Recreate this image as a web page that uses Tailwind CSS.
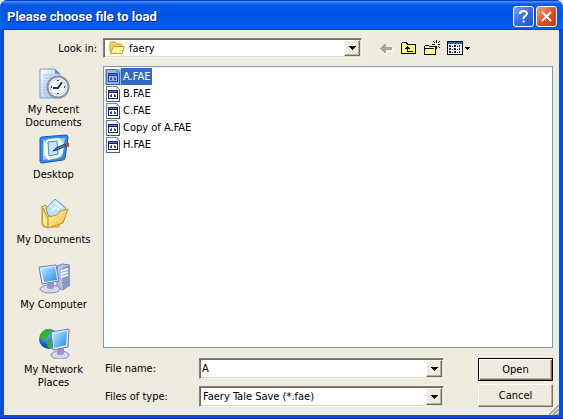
<!DOCTYPE html>
<html lang="en">
<head>
    <meta charset="UTF-8">
    <meta name="viewport" content="width=device-width, initial-scale=1.0">
    <title>Please choose file to load</title>
    <script src="https://cdn.jsdelivr.net/npm/@tailwindcss/browser@4"></script>
</head>
<body class="bg-[#dfe8f5] text-black text-[11px] leading-[13px] font-['Tahoma','DejaVu_Sans_Condensed',sans-serif]">

    <!-- Shared icons -->
    <svg class="hidden">
        <symbol id="arrow" viewBox="0 0 7 4" shape-rendering="crispEdges">
            <path d="M0 0h7v1H0zM1 1h5v1H1zM2 2h3v1H2zM3 3h1v1H3z"/>
        </symbol>
        <symbol id="file" viewBox="0 0 16 16" shape-rendering="crispEdges">
            <path d="M1 0h10l4 4v12H1z" fill="#71819a"/>
            <path d="M2 1h9v3h3v11H2z" fill="#fff"/>
            <path d="M11 1l3 3h-3z" fill="#d5dcea"/>
            <path d="M14 4h1v12H2v-1h12z" fill="#4b5870"/>
            <path d="M3 4h10v9H3z" fill="#14216b"/>
            <path d="M4 5h8v1H4z" fill="#4f78d8"/>
            <path d="M4 7h8v5H4z" fill="#fff"/>
            <path d="M5 9h2v2H5z" fill="#29489e"/>
            <path d="M9 9h2v2H9z" fill="#29489e"/>
            <path d="M6 8h1v1H6zM9 8h1v1H9z" fill="#c03030"/>
        </symbol>
    </svg>

    <div class="min-h-screen flex flex-col rounded-t-lg overflow-hidden bg-[#0a4be0] border-b border-[#001a9c]">

        <!-- Title bar -->
        <header class="h-[30px] shrink-0 flex items-center justify-between pl-[7px] pr-[6px] bg-linear-to-b from-[#0a5be8] via-[#0054e3] to-[#0060f8] shadow-[inset_0_1px_0_#0a3fc0,inset_0_3px_2px_#3c8cf8,inset_0_-1px_1px_#0040c0]">
            <h1 class="pt-[3px] text-[13px] leading-4 font-bold text-white font-['Trebuchet_MS','Roboto',sans-serif] [text-shadow:1px_1px_#0a1883]">Please choose file to load</h1>
            <div class="flex gap-[2px] pt-[2px]">
                <button aria-label="Help" class="size-[21px] rounded-[3px] border border-white bg-linear-to-br from-[#7aa4f5] via-[#3a6ce8] to-[#1f50d0] grid place-items-center">
                    <svg class="size-[19px]" viewBox="0 0 19 19" fill="none" stroke="#fff" stroke-width="2"><path d="M6 7C6 3 13 3 13 6.500C13 9 9.500 8.500 9.500 12"/><path d="M9.500 13.500v2"/></svg>
                </button>
                <button aria-label="Close" class="size-[21px] rounded-[3px] border border-white bg-linear-to-br from-[#f0a088] via-[#e0512c] to-[#c03a12] grid place-items-center">
                    <svg class="size-[19px]" viewBox="0 0 19 19" stroke="#fff" stroke-width="2"><path d="M5 5l9 9M14 5l-9 9"/></svg>
                </button>
            </div>
        </header>

        <main class="relative flex-1 flex flex-col mx-1 mb-[3px] pt-2 pr-[6px] pb-2 bg-[#efebde]">

            <!-- Folder and toolbar -->
            <div class="flex items-center">
                <label for="folder" class="w-[99px] pr-[6px] text-right">Look in:</label>
                <div class="relative flex-1 max-w-[259px] h-5 bg-white border border-t-[#848278] border-l-[#848278] border-b-[#f8f6f0] border-r-[#f8f6f0] shadow-[inset_1px_1px_#716f64,inset_-1px_-1px_#e0dccc]">
                    <select id="folder" class="appearance-none w-full h-full pl-[25px] outline-none">
                        <option>faery</option>
                    </select>
                    <svg class="absolute left-[5px] top-[2px] w-4 h-[14px] pointer-events-none" viewBox="0 0 16 14">
                        <path d="M1 11V2.500Q1 1 2.500 1H6l1.500 2H12q1 0 1 1v7z" fill="#f5d162" stroke="#c99a22"/>
                        <path d="M1.500 12.500L4 5.500h11.500L13 12.500z" fill="#fdf0a0" stroke="#c99a22" stroke-linejoin="round"/>
                    </svg>
                    <span class="absolute right-px top-px bottom-px w-4 grid place-items-center pointer-events-none bg-[#efebde] border border-t-white border-l-white border-b-[#716f64] border-r-[#716f64] shadow-[inset_-1px_-1px_#b5b1a2]"><svg class="w-[7px] h-1"><use href="#arrow"/></svg></span>
                </div>
                <div class="flex items-center pl-[18px] gap-[7px]">
                    <button aria-label="Back" class="w-[14px]">
                        <svg class="w-[14px] h-4" viewBox="0 0 14 16" shape-rendering="crispEdges"><path d="M2 10h1v1h1v1h1v1h1v-2h7V8h1v4H7v3H5v-1H4v-1H3v-1H2z" fill="#fff"/><path d="M0 8h1V7h1V6h1V5h1V4h2v3h6v3H6v3H4v-1H3v-1H2v-1H1V9H0z" fill="#aca899"/></svg>
                    </button>
                    <button aria-label="Up one level" class="w-4">
                        <svg class="size-4" viewBox="0 0 16 16" shape-rendering="crispEdges"><path d="M1 2h5v1h1v1h8v10H0V3h1z"/><path d="M1 3h4v1h1v1h8v8H1z" fill="#ffff80"/><path d="M6 6h1v1h1v1h1v1H7v2h5v1H6V9H4V8h1V7h1z"/></svg>
                    </button>
                    <button aria-label="New folder" class="w-4">
                        <svg class="size-4" viewBox="0 0 16 16" shape-rendering="crispEdges"><path d="M1 5h4v1h7v9H0V6h1z"/><path d="M1 6h4v1h6v7H1z" fill="#ffff80"/><path d="M1 8h9v1H1z" fill="#000"/><path d="M12 0h1v3h-1zM12 6h1v3h-1zM8 4h3v1H8zM14 4h2v1h-2zM9 1h1v1H9zM10 2h1v1h-1zM14 2h1v1h-1zM15 1h1v1h-1zM14 6h1v1h-1zM15 7h1v1h-1z"/></svg>
                    </button>
                    <button aria-label="View menu" class="w-6">
                        <svg class="w-6 h-4" viewBox="0 0 24 16" shape-rendering="crispEdges"><path d="M0 1h16v14H0z"/><path d="M1 4h14v10H1z" fill="#fff"/><path d="M1 2h14v2H1z" fill="#31619c"/><path d="M2 5h2v2H2zM7 5h2v2H7zM12 5h1v2h-1zM2 8h2v2H2zM7 8h2v2H7zM12 8h1v2h-1zM2 11h2v2H2zM7 11h2v2H7zM12 11h1v2h-1z" fill="#15157a"/><path d="M5 6h1v1H5zM10 6h1v1h-1zM5 9h1v1H5zM10 9h1v1h-1zM5 12h1v1H5zM10 12h1v1h-1z"/><path d="M18 7h5v1h-5zM19 8h3v1h-3zM20 9h1v1h-1z"/></svg>
                    </button>
                </div>
            </div>

            <div class="flex-1 flex pt-2">

                <!-- Places -->
                <nav class="w-[99px] pt-px text-center">
                    <a href="#" class="h-[65px] flex flex-col items-center gap-1">
                        <svg class="size-8 shrink-0" viewBox="0 0 32 32">
                            <defs><linearGradient id="page" x2="1" y2="1"><stop stop-color="#fff"/><stop offset="1" stop-color="#8db8f2"/></linearGradient></defs>
                            <path d="M2 2h15l5 5v24H2z" fill="url(#page)" stroke="#7f9fd2"/>
                            <path d="M17 2v5h5z" fill="#6a8fd0"/>
                            <path d="M5 8h9M5 11h12M5 14h8M5 17h6M5 20h6M5 23h6M5 26h8" stroke="#a5c3ee"/>
                            <circle cx="20" cy="20" r="10.500" fill="#eef3f6" stroke="#8a929a" stroke-width="2"/>
                            <circle cx="20" cy="20" r="8" fill="#f4fafc" stroke="#c5d0d6"/>
                            <path d="M20 13v1M20 26v1M13 20h1M26 20h1" stroke="#444" stroke-width="2"/>
                            <path d="M24 15l-4 6h-5" fill="none" stroke="#1a3a58" stroke-width="2"/>
                        </svg>
                        <span>My Recent<br>Documents</span>
                    </a>
                    <a href="#" class="h-[65px] flex flex-col items-center gap-1">
                        <svg class="size-8 shrink-0" viewBox="0 0 32 32">
                            <path d="M4 5l24-2q2 0 2 2l-3 21q0 2-2 2L4 31q-2 0-2-2L2 7q0-2 2-2z" fill="#3a8ae8" stroke="#1857ae"/>
                            <path d="M5 8l22-2-3 19-19 3z" fill="#9ad0ff"/>
                            <path d="M10 7l11-1 5 6-1 9-5 5-10 2-4-6V12z" fill="#fdf8dc"/>
                            <path d="M10 10l9-1 1 13-9 2z" fill="#c4e5ff" stroke="#3b8ce0"/>
                            <path d="M15 19l3-3 9-4 1 2-9 4z" fill="#4a84c4" stroke="#1b3c78"/>
                            <path d="M28 10l3 1v4l-3-1z" fill="#c84030"/>
                        </svg>
                        <span>Desktop</span>
                    </a>
                    <a href="#" class="h-[65px] flex flex-col items-center gap-1">
                        <svg class="size-8 shrink-0" viewBox="0 0 32 32">
                            <defs><linearGradient id="gold" x2="1" y2="1"><stop stop-color="#fff6b0"/><stop offset="1" stop-color="#eebb38"/></linearGradient></defs>
                            <path d="M4 10l3-2 4 3 10 3v16H6l-2-2z" fill="#f6d768" stroke="#c49628"/>
                            <path d="M8 11L17 2l11 9-9 12-9-5z" fill="#b8defc" stroke="#5b9bd8"/>
                            <path d="M12 10l5-5 7 6M14 14l4-4 3 3" fill="none" stroke="#eef9ff" stroke-width="2"/>
                            <path d="M5 11l5 11v9l-4-2-2-3z" fill="#fbe88a" stroke="#c49628"/>
                            <path d="M10 20l9-2 3-4 8-2-5 14-15 5z" fill="url(#gold)" stroke="#c49628" stroke-linejoin="round"/>
                        </svg>
                        <span>My Documents</span>
                    </a>
                    <a href="#" class="h-[65px] flex flex-col items-center gap-1">
                        <svg class="size-8 shrink-0" viewBox="0 0 32 32">
                            <defs><linearGradient id="screen" x2="1" y2="1"><stop stop-color="#b8f0ff"/><stop offset="1" stop-color="#2088e8"/></linearGradient></defs>
                            <path d="M19 4l5-2 8 1v20l-7 5-6-3z" fill="#b8bfe4" stroke="#7c83b8"/>
                            <path d="M24 6l8-3v20l-7 5z" fill="#8d95cb"/>
                            <path d="M23 9l7-2M23 12l7-2M23 15l7-2" stroke="#eef0ff" stroke-width="2"/>
                            <path d="M24 20h2v2h-2z" fill="#58d058"/>
                            <ellipse cx="12" cy="27" rx="10" ry="4" fill="#d4d6ec" stroke="#8b8fbb"/>
                            <path d="M9 19h7v7q-4 2-7 0z" fill="#9296c8"/>
                            <path d="M1 5l17-2 3 16-17 3z" fill="#dfe5fa" stroke="#707bb8"/>
                            <path d="M3 7l14-2 2 13-13 2z" fill="url(#screen)"/>
                        </svg>
                        <span>My Computer</span>
                    </a>
                    <a href="#" class="h-[65px] flex flex-col items-center gap-1">
                        <svg class="size-8 shrink-0" viewBox="0 0 32 32">
                            <defs><radialGradient id="globe" cx=".35" cy=".3"><stop stop-color="#8cd0ff"/><stop offset="1" stop-color="#1550c0"/></radialGradient></defs>
                            <circle cx="11" cy="12" r="10" fill="url(#globe)"/>
                            <path d="M4 5q4-4 9-3l2 3-4 2-1 4-4 2-4-2q0-4 2-6zM8 15l5-2 3 4-3 5q-4-1-5-7z" fill="#35b035"/>
                            <ellipse cx="22" cy="28" rx="9" ry="4" fill="#d4d6ec" stroke="#8b8fbb"/>
                            <path d="M19 20h7v7q-4 2-7 0z" fill="#9296c8"/>
                            <path d="M13 5l18-3-1 18-15 3z" fill="#dfe5fa" stroke="#707bb8"/>
                            <path d="M15 7l14-3-1 14-12 3z" fill="url(#screen)"/>
                        </svg>
                        <span>My Network<br>Places</span>
                    </a>
                </nav>

                <div class="flex-1 flex flex-col">
                    <!-- File list -->
                    <ul class="flex-1 min-h-[200px] bg-white border border-[#7f9db9] p-px">
                        <li><button class="h-[17px] flex items-center"><span class="relative block size-4"><svg class="size-4"><use href="#file"/></svg><span class="absolute inset-0 bg-[#316ac5]/50"></span></span><span class="px-[2px] py-[2px] bg-[#316ac5] text-white">A.FAE</span></button></li>
                        <li><button class="h-[17px] flex items-center"><svg class="size-4"><use href="#file"/></svg><span class="px-[2px]">B.FAE</span></button></li>
                        <li><button class="h-[17px] flex items-center"><svg class="size-4"><use href="#file"/></svg><span class="px-[2px]">C.FAE</span></button></li>
                        <li><button class="h-[17px] flex items-center"><svg class="size-4"><use href="#file"/></svg><span class="px-[2px]">Copy of A.FAE</span></button></li>
                        <li><button class="h-[17px] flex items-center"><svg class="size-4"><use href="#file"/></svg><span class="px-[2px]">H.FAE</span></button></li>
                    </ul>

                    <!-- Name, type and buttons -->
                    <div class="flex justify-between pt-[10px]">
                        <div class="flex-1 max-w-[341px] flex flex-col justify-between">
                            <div class="flex items-center">
                                <label for="filename" class="w-24 pl-[2px]">File name:</label>
                                <div class="relative flex-1 h-[21px] bg-white border border-t-[#848278] border-l-[#848278] border-b-[#f8f6f0] border-r-[#f8f6f0] shadow-[inset_1px_1px_#716f64,inset_-1px_-1px_#e0dccc]">
                                    <input id="filename" type="text" value="A" class="w-full h-full pl-[2px] outline-none">
                                    <button aria-label="Show names" class="absolute right-px top-px bottom-px w-4 grid place-items-center bg-[#efebde] border border-t-white border-l-white border-b-[#716f64] border-r-[#716f64] shadow-[inset_-1px_-1px_#b5b1a2]"><svg class="w-[7px] h-1"><use href="#arrow"/></svg></button>
                                </div>
                            </div>
                            <div class="flex items-center">
                                <label for="filetype" class="w-24 pl-[2px]">Files of type:</label>
                                <div class="relative flex-1 h-[21px] bg-white border border-t-[#848278] border-l-[#848278] border-b-[#f8f6f0] border-r-[#f8f6f0] shadow-[inset_1px_1px_#716f64,inset_-1px_-1px_#e0dccc]">
                                    <select id="filetype" class="appearance-none w-full h-full pl-[3px] outline-none">
                                        <option>Faery Tale Save (*.fae)</option>
                                    </select>
                                    <span class="absolute right-px top-px bottom-px w-4 grid place-items-center pointer-events-none bg-[#efebde] border border-t-white border-l-white border-b-[#716f64] border-r-[#716f64] shadow-[inset_-1px_-1px_#b5b1a2]"><svg class="w-[7px] h-1"><use href="#arrow"/></svg></span>
                                </div>
                            </div>
                        </div>
                        <div class="w-[75px] flex flex-col gap-[3px]">
                            <button class="h-[23px] border border-black shadow-[inset_1px_1px_#fff,inset_-1px_-1px_#716f64,inset_-2px_-2px_#b5b1a2]">Open</button>
                            <button class="h-[23px] border border-t-white border-l-white border-b-[#716f64] border-r-[#716f64] shadow-[inset_-1px_-1px_#b5b1a2]">Cancel</button>
                        </div>
                    </div>
                </div>
            </div>

            <!-- Resize grip -->
            <svg class="absolute right-0 bottom-0 size-3" viewBox="0 0 12 12" stroke-width="1"><path d="M0 12L12 0M4 12l8-8M8 12l4-4" stroke="#fff"/><path d="M2 12L12 2M6 12l6-6M10 12l2-2" stroke="#aca899" stroke-width="2"/></svg>
        </main>
    </div>
</body>
</html>
